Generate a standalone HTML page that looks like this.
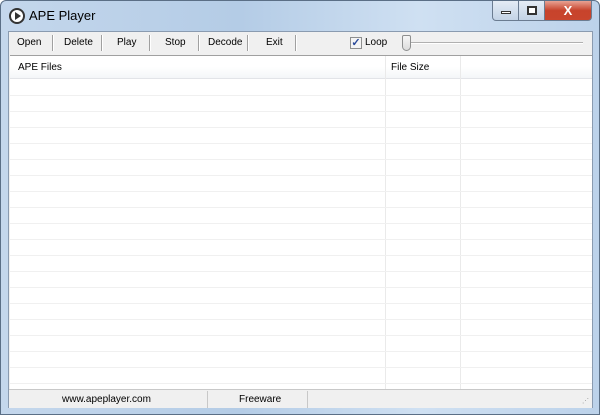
<!DOCTYPE html>
<html><head><meta charset="utf-8"><style>
*{margin:0;padding:0;box-sizing:border-box}
body{width:600px;height:415px;overflow:hidden;font-family:"Liberation Sans",sans-serif;font-size:10px;color:#000;background:#fff}
.win{position:absolute;left:0;top:0;width:600px;height:415px;border:1px solid #5b6f86;border-radius:6px 6px 0 0;background:linear-gradient(90deg,#c4d7ec,#b4cce6 40%,#cfe0f2 70%,#bcd2ea);overflow:hidden}
.title{position:absolute;left:28px;top:7px;font-size:13px;color:#000}
.icon{position:absolute;left:8px;top:7px;width:16px;height:16px;border-radius:50%;border:2px solid #333;background:#fff}
.icon:after{content:"";position:absolute;left:4px;top:2px;border-left:6px solid #333;border-top:4px solid transparent;border-bottom:4px solid transparent}
.cb{position:absolute;top:0;height:20px;border:1px solid #6b7c91;border-top:none}
.client{position:absolute;left:7px;top:30px;width:585px;height:377px;background:#f0f0f0;border:1px solid #8a9bb0}
.tb{position:absolute;top:0;left:0;right:0;height:22px;background:#f0f0f0}
.btn{position:absolute;top:5px;font-size:10px}
.sep{position:absolute;top:3px;width:2px;height:16px;border-left:1px solid #a0a0a0;border-right:1px solid #fff}
.list{position:absolute;left:1px;top:23px;width:582px;height:334px;background:#fff;border-top:1px solid #a0a0a0}
.hdr{position:absolute;left:0;top:0;right:0;height:23px;background:linear-gradient(#fff,#fff 50%,#f4f6f8);border-bottom:1px solid #e2e4e8}
.row{position:absolute;left:0;right:0;height:1px;background:#f0f0f0}
.vl{position:absolute;top:0;bottom:0;width:1px;background:#eaeaea}
.sb{position:absolute;left:0;right:0;top:357px;height:19px;background:#f0f0f0;border-top:1px solid #c8c8c8}
</style></head><body>
<div class="win">
<div class="icon"></div>
<div class="title">APE Player</div>
<div class="cb" style="left:491px;width:27px;border-radius:0 0 0 4px;background:linear-gradient(#e4ecf5,#c3d3e6)"><div style="position:absolute;left:8px;top:10px;width:10px;height:3px;border:1px solid #333;background:#fff"></div></div>
<div class="cb" style="left:517px;width:27px;background:linear-gradient(#e4ecf5,#c3d3e6)"><div style="position:absolute;left:8px;top:5px;width:10px;height:9px;border:2px solid #333;background:#fff"></div></div>
<div class="cb" style="left:543px;width:48px;border-radius:0 0 4px 0;background:linear-gradient(#e8a293,#c7432c 50%,#c9452d)"><div style="position:absolute;left:0;right:0;top:2px;text-align:center;color:#fff;font-weight:bold;font-size:13px">X</div></div>
<div class="client">
<div class="tb">
<span class="btn" style="left:8px">Open</span><div class="sep" style="left:43px"></div>
<span class="btn" style="left:55px">Delete</span><div class="sep" style="left:92px"></div>
<span class="btn" style="left:108px">Play</span><div class="sep" style="left:140px"></div>
<span class="btn" style="left:156px">Stop</span><div class="sep" style="left:189px"></div>
<span class="btn" style="left:199px">Decode</span><div class="sep" style="left:238px"></div>
<span class="btn" style="left:257px">Exit</span><div class="sep" style="left:286px"></div>
<div style="position:absolute;left:341px;top:5px;width:12px;height:12px;border:1px solid #8e8f8f;background:#f4f4f4;color:#2a4a9a;font-size:11px;line-height:10px;text-align:center;font-weight:bold">✓</div>
<span class="btn" style="left:356px">Loop</span>
<div style="position:absolute;left:400px;top:10px;width:174px;height:2px;border-top:1px solid #b0b0b0;border-bottom:1px solid #fff"></div>
<div style="position:absolute;left:393px;top:3px;width:9px;height:16px;border:1px solid #8e8f8f;border-radius:2px 2px 5px 5px;background:linear-gradient(#f6f6f6,#dcdcdc)"></div>
</div>
<div class="list">
<div class="hdr"><span style="position:absolute;left:8px;top:6px">APE Files</span><span style="position:absolute;left:381px;top:6px">File Size</span></div>
<div class="vl" style="left:375px"></div><div class="vl" style="left:450px"></div>
<div class="row" style="top:39px"></div><div class="row" style="top:55px"></div><div class="row" style="top:71px"></div><div class="row" style="top:87px"></div><div class="row" style="top:103px"></div><div class="row" style="top:119px"></div><div class="row" style="top:135px"></div><div class="row" style="top:151px"></div><div class="row" style="top:167px"></div><div class="row" style="top:183px"></div><div class="row" style="top:199px"></div><div class="row" style="top:215px"></div><div class="row" style="top:231px"></div><div class="row" style="top:247px"></div><div class="row" style="top:263px"></div><div class="row" style="top:279px"></div><div class="row" style="top:295px"></div><div class="row" style="top:311px"></div><div class="row" style="top:327px"></div>
</div>
<div class="sb">
<span style="position:absolute;left:53px;top:4px">www.apeplayer.com</span>
<div style="position:absolute;left:198px;top:1px;width:1px;height:17px;background:#c8c8c8"></div>
<span style="position:absolute;left:230px;top:4px">Freeware</span>
<div style="position:absolute;left:298px;top:1px;width:1px;height:17px;background:#c8c8c8"></div>
<span style="position:absolute;right:3px;top:7px;color:#999;font-size:7px">⋰</span>
</div>
</div>
</div>
</body></html>
